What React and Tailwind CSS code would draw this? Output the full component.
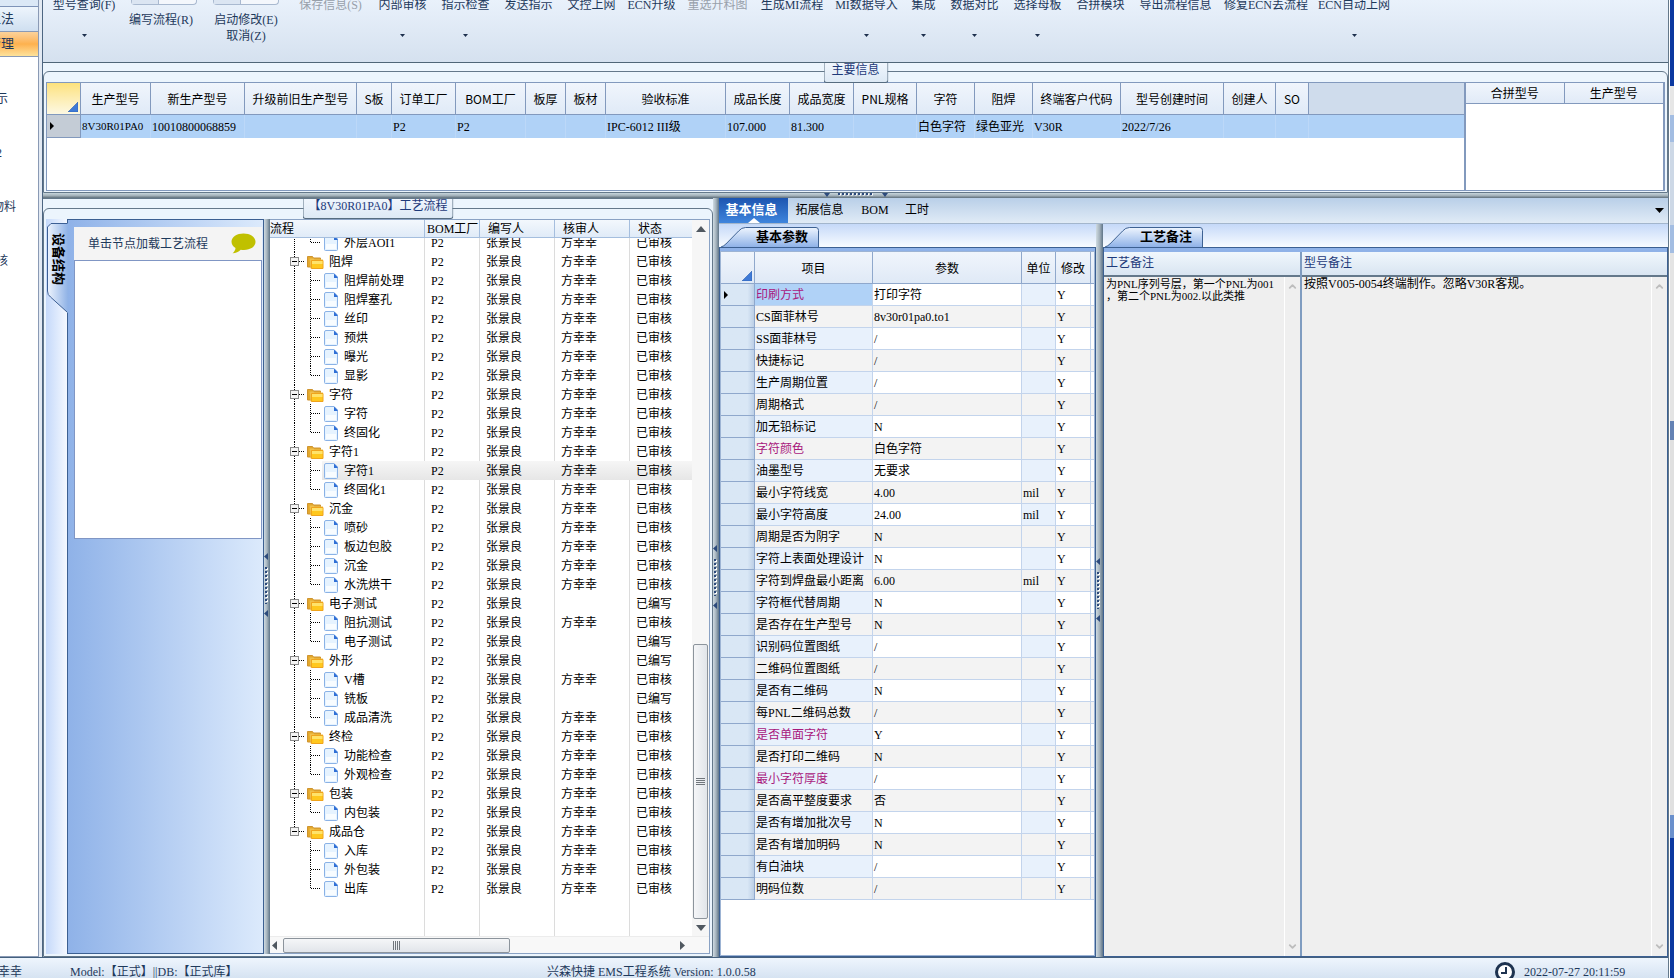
import clsx from "clsx";
import { ChevronDown, ChevronUp } from "lucide-react";

const ribbonLeft = { label: "型号查询(F)", width: "w-[82px]", menu: true };

const ribbonItems = [
  { label: "内部审核", width: "w-[63px]", menu: true },
  { label: "指示检查", width: "w-[63px]", menu: true },
  { label: "发送指示", width: "w-[63px]" },
  { label: "文控上网", width: "w-[63px]" },
  { label: "ECN升级", width: "w-[57px]" },
  { label: "重选开料图", width: "w-[75px]", disabled: true },
  { label: "生成MI流程", width: "w-[74px]" },
  { label: "MI数据导入", width: "w-[75px]", menu: true },
  { label: "集成", width: "w-[39px]", menu: true },
  { label: "数据对比", width: "w-[63px]", menu: true },
  { label: "选择母板", width: "w-[63px]", menu: true },
  { label: "合拼模块", width: "w-[63px]" },
  { label: "导出流程信息", width: "w-[87px]" },
  { label: "修复ECN丢流程", width: "w-[94px]" },
  { label: "ECN自动上网", width: "w-[82px]", menu: true },
];

const mainColumns = [
  { title: "生产型号", width: "w-[70px]", value: "8V30R01PA0", small: true },
  { title: "新生产型号", width: "w-[94px]", value: "10010800068859" },
  { title: "升级前旧生产型号", width: "w-[112px]" },
  { title: "S板", width: "w-[35px]" },
  { title: "订单工厂", width: "w-[64px]", value: "P2" },
  { title: "BOM工厂", width: "w-[70px]", value: "P2" },
  { title: "板厚", width: "w-[40px]" },
  { title: "板材", width: "w-[40px]" },
  { title: "验收标准", width: "w-[120px]", value: "IPC-6012 III级" },
  { title: "成品长度", width: "w-[64px]", value: "107.000" },
  { title: "成品宽度", width: "w-[64px]", value: "81.300" },
  { title: "PNL规格", width: "w-[63px]" },
  { title: "字符", width: "w-[58px]", value: "白色字符" },
  { title: "阻焊", width: "w-[58px]", value: "绿色亚光" },
  { title: "终端客户代码", width: "w-[88px]", value: "V30R" },
  { title: "型号创建时间", width: "w-[103px]", value: "2022/7/26" },
  { title: "创建人", width: "w-[52px]" },
  { title: "SO", width: "w-[33px]" },
];

const tree = [
  { name: "外层AOI1", last: true },
  { name: "阻焊", folder: true },
  { name: "阻焊前处理" },
  { name: "阻焊塞孔" },
  { name: "丝印" },
  { name: "预烘" },
  { name: "曝光" },
  { name: "显影", last: true },
  { name: "字符", folder: true },
  { name: "字符" },
  { name: "终固化", last: true },
  { name: "字符1", folder: true },
  { name: "字符1", selected: true },
  { name: "终固化1", last: true },
  { name: "沉金", folder: true },
  { name: "喷砂" },
  { name: "板边包胶" },
  { name: "沉金" },
  { name: "水洗烘干", last: true },
  { name: "电子测试", folder: true, auditor: "", status: "已编写" },
  { name: "阻抗测试" },
  { name: "电子测试", last: true, auditor: "", status: "已编写" },
  { name: "外形", folder: true, auditor: "", status: "已编写" },
  { name: "V槽" },
  { name: "铣板", auditor: "", status: "已编写" },
  { name: "成品清洗", last: true },
  { name: "终检", folder: true },
  { name: "功能检查" },
  { name: "外观检查", last: true },
  { name: "包装", folder: true },
  { name: "内包装", last: true },
  { name: "成品仓", folder: true, lastFolder: true },
  { name: "入库", tail: true },
  { name: "外包装", tail: true },
  { name: "出库", tail: true, last: true },
];

const params = [
  ["印刷方式", "打印字符", "", true],
  ["CS面菲林号", "8v30r01pa0.to1"],
  ["SS面菲林号", "/"],
  ["快捷标记", "/"],
  ["生产周期位置", "/"],
  ["周期格式", "/"],
  ["加无铅标记", "N"],
  ["字符颜色", "白色字符", "", true],
  ["油墨型号", "无要求"],
  ["最小字符线宽", "4.00", "mil"],
  ["最小字符高度", "24.00", "mil"],
  ["周期是否为阴字", "N"],
  ["字符上表面处理设计", "N"],
  ["字符到焊盘最小距离", "6.00", "mil"],
  ["字符框代替周期", "N"],
  ["是否存在生产型号", "N"],
  ["识别码位置图纸", "/"],
  ["二维码位置图纸", "/"],
  ["是否有二维码", "N"],
  ["每PNL二维码总数", "/"],
  ["是否单面字符", "Y", "", true],
  ["是否打印二维码", "N"],
  ["最小字符厚度", "/", "", true],
  ["是否高平整度要求", "否"],
  ["是否有增加批次号", "N"],
  ["是否有增加明码", "N"],
  ["有白油块", "/"],
  ["明码位数", "/"],
];

const HEAD_FONT = "font-['Noto_Sans_CJK_SC',sans-serif]";

function MenuArrow() {
  return (
    <svg width="5" height="3" viewBox="0 0 5 3" className="block">
      <path d="M0 0h5L2.5 3z" fill="#1d2f4d" />
    </svg>
  );
}

function RibbonButton({ label, width, menu, disabled }) {
  return (
    <button
      disabled={disabled}
      className={clsx(
        "flex h-full shrink-0 flex-col items-center whitespace-nowrap leading-[11px]",
        disabled ? "text-[#98a0aa]" : "text-[#1e395b]",
        width
      )}
    >
      <span>{label}</span>
      {menu && (
        <span className="mt-[23px]">
          <MenuArrow />
        </span>
      )}
    </button>
  );
}

function Gauge() {
  return (
    <div className="flex h-[5px] w-[66px] rounded-b-sm border-x border-b border-[#a9b9d0] bg-[#f4f7fc]">
      <div className="w-[27px] border-r border-[#a9b9d0] bg-[#dbe5f2]" />
    </div>
  );
}

function Ribbon() {
  return (
    <div className="flex h-[62px] shrink-0 overflow-hidden bg-linear-to-b from-[#e9f1fb] to-[#d5e1ef]">
      <RibbonButton {...ribbonLeft} />
      <div className="flex w-[72px] shrink-0 flex-col items-end">
        <Gauge />
        <button className="mt-2 w-full whitespace-nowrap leading-[14px] text-[#1e395b]">编写流程(R)</button>
      </div>
      <div className="flex w-[98px] shrink-0 flex-col items-center">
        <Gauge />
        <button className="mt-2 whitespace-nowrap leading-[14px] text-[#1e395b]">启动修改(E)</button>
        <button className="mt-px whitespace-nowrap leading-4 text-[#1e395b]">取消(Z)</button>
      </div>
      <RibbonButton label="保存信息(S)" width="w-[71px]" disabled />
      <div className="w-[5px] shrink-0" />
      {ribbonItems.map((item) => (
        <RibbonButton key={item.label} {...item} />
      ))}
    </div>
  );
}

function Sidebar() {
  return (
    <nav className="flex w-[43px] shrink-0 flex-col overflow-hidden border-r border-[#4d6682] bg-[#e3eaf3] pr-[3px]">
      <div className="flex min-h-0 flex-1 flex-col border-r border-b border-[#8a9ab5] bg-white text-[#1e395b]">
        <div className="h-[6px] shrink-0 bg-[#dbe8f6]" />
        <button className="flex h-[25px] shrink-0 items-center border-t border-[#7e93b8] bg-linear-to-b from-[#eef5fc] to-[#cfdff0] text-[13px]">
          <span className="-ml-3 whitespace-nowrap">工法</span>
        </button>
        <button className="flex h-[26px] shrink-0 items-center border-y border-[#8a9ab5] bg-linear-to-b from-[#fbd29a] via-[#fdb14e] to-[#fde29a] text-[13px]">
          <span className="-ml-3 whitespace-nowrap">管理</span>
        </button>
        <a href="#" className="mt-[33px] -ml-1 leading-[18px]">示</a>
        <a href="#" className="mt-[36px] -ml-1 leading-[18px]">2</a>
        <a href="#" className="mt-[36px] -ml-2 leading-[18px] whitespace-nowrap">物料</a>
        <a href="#" className="mt-[36px] -ml-1 leading-[18px]">核</a>
      </div>
    </nav>
  );
}

// Group box whose caption sits over its top border
function GroupBox({ title, width, className, children }) {
  return (
    <section className={clsx("relative flex flex-col bg-[#ecf5fd]", className)}>
      <div className="flex min-h-0 flex-1 flex-col rounded-t-md border border-[#64788a] px-[2px]">{children}</div>
      <h2
        className={clsx(
          "absolute top-0 left-1/2 h-5 -translate-x-1/2 rounded-b-[3px] border border-t-0 border-[#566c80] bg-linear-to-b from-[#f0f6fd] to-[#dde9f5] text-center leading-[15px] whitespace-nowrap text-[#1e3a7a]",
          width
        )}
      >
        {title}
      </h2>
    </section>
  );
}

function Corner({ className }) {
  return (
    <svg width="10" height="10" viewBox="0 0 10 10" className={className}>
      <path d="M10 0v10H0z" fill="#3f7ad6" stroke="#2e5fae" strokeWidth=".6" />
    </svg>
  );
}

function RowMarker() {
  return (
    <svg width="4" height="8" viewBox="0 0 4 8" className="ml-[3px] block">
      <path d="M0 0l4 4-4 4z" fill="#000" />
    </svg>
  );
}

function MainInfo() {
  return (
    <GroupBox title="主要信息" width="w-[65px]" className="h-[131px] shrink-0 border-t border-[#4f6678] pt-2">
      <div className="mt-[10px] mb-px flex min-h-0 flex-1 border border-[#8299bd] bg-white">
        <div className="min-w-0 flex-1 overflow-hidden bg-white">
          <table className="w-full table-fixed border-separate border-spacing-0">
            <thead className={HEAD_FONT}>
              <tr className="h-8">
                <th className="w-[34px] border-r border-b border-[#8299bd] bg-linear-to-b from-[#fde27c] to-[#fdf8e2] p-0 align-bottom">
                  <Corner className="mr-[2px] mb-[2px] ml-auto" />
                </th>
                {mainColumns.map((col) => (
                  <th
                    key={col.title}
                    className={clsx(
                      "border-r border-b border-[#8299bd] bg-linear-to-b from-[#f0f5fc] to-[#e0eaf7] p-0 font-normal whitespace-nowrap",
                      col.width
                    )}
                  >
                    {col.title}
                  </th>
                ))}
                <th className="border-b border-[#8299bd] bg-[#cfdcec]" />
              </tr>
            </thead>
            <tbody>
              <tr className="h-[23px] bg-[#b0d2f7]">
                <td className="border-r border-b border-[#8299bd] bg-[#c4ccd6] p-0">
                  <RowMarker />
                </td>
                {mainColumns.map((col) => (
                  <td
                    key={col.title}
                    className={clsx("border-r border-[#bcd8f8] p-0 pl-px whitespace-nowrap", col.small && "text-[11px]")}
                  >
                    {col.value}
                  </td>
                ))}
                <td />
              </tr>
            </tbody>
          </table>
        </div>
        <div className="w-[200px] shrink-0 border-l-2 border-r border-[#8299bd] bg-white">
          <table className={clsx("w-full table-fixed border-separate border-spacing-0", HEAD_FONT)}>
            <thead>
              <tr className="h-[21px] bg-linear-to-b from-[#f0f5fc] to-[#e0eaf7]">
                <th className="border-r border-b border-[#8299bd] p-0 font-normal">合拼型号</th>
                <th className="border-b border-[#8299bd] p-0 font-normal">生产型号</th>
              </tr>
            </thead>
          </table>
        </div>
      </div>
    </GroupBox>
  );
}

function HorizontalSplitter() {
  return (
    <div className="flex h-[5px] shrink-0 justify-center bg-linear-to-b from-[#c6d5dc] via-[#a5b3bb] to-[#5f707c]">
      <svg width="64" height="5" viewBox="0 0 64 5">
        <path d="M0 0h6L3 4zM58 0h6l-3 4z" fill="#2c4a7c" />
        <path d="M14 1.500h36" stroke="#fff" strokeWidth="2" strokeDasharray="2 2" strokeDashoffset="-1" />
        <path d="M14 1h36" stroke="#2c4a7c" strokeWidth="2" strokeDasharray="2 2" />
      </svg>
    </div>
  );
}

function VerticalSplitter({ width, grip }) {
  return (
    <div className={clsx("flex shrink-0 flex-col bg-linear-to-r from-[#cfdbe2] via-[#a5b3bd] to-[#5f7588]", width)}>
      <svg width="6" height="64" viewBox="0 0 6 64" className={grip}>
        <path d="M4 0v7L0 3.500zM4 57v7l-4-3.500z" fill="#2c4a7c" />
        <path d="M3 14v37" stroke="#fff" strokeWidth="2" strokeDasharray="2 2" strokeDashoffset="-1" />
        <path d="M2 14v37" stroke="#2c4a7c" strokeWidth="2" strokeDasharray="2 2" />
      </svg>
    </div>
  );
}

function DevicePanel() {
  return (
    <>
      <div className="relative w-[21px] shrink-0 bg-linear-to-r from-[#c5d9fa] to-[#f4f8ff]">
        <svg width="22" height="96" viewBox="0 0 22 96" className="absolute top-1 left-px">
          <defs>
            <linearGradient id="sideTab">
              <stop offset="0" stopColor="#eef4fd" />
              <stop offset="1" stopColor="#8fb2e6" />
            </linearGradient>
          </defs>
          <path d="M21 .5H4L.5 4v64q0 4 3 6L21 90z" fill="url(#sideTab)" />
          <path d="M20 .5H4L.5 4v64q0 4 3 6L20 89" fill="none" stroke="#3c5f94" />
        </svg>
        <button className="absolute top-[14px] left-1 text-[13px] leading-4 font-bold [text-orientation:sideways] [writing-mode:vertical-rl]">
          设备结构
        </button>
      </div>
      <div className="flex w-[197px] shrink-0 flex-col border border-[#3c6092] bg-linear-to-r from-[#8fb2e8] to-[#dceafc] pt-[7px] pr-px pl-[6px]">
        <div className="flex h-[33px] shrink-0 items-center justify-between bg-[#f4f4f4] pr-[6px] pl-[14px] text-[#1e395b]">
          <span>单击节点加载工艺流程</span>
          <svg width="25" height="21" viewBox="0 0 25 21">
            <path d="M12.500.5C19 .5 24.500 4 24.500 8.800S19.500 17 13 17c-1.200 0-2.300-.1-3.300-.3C7.500 18.800 5 20 1.500 20.300 3.300 18.900 4.400 17 4.500 15 2 13.500.5 11.300.5 8.800.5 4 6 .5 12.500.5z" fill="#c0c000" />
          </svg>
        </div>
        <div className="h-[279px] border border-[#8096c4] bg-white" />
      </div>
    </>
  );
}

function FolderIcon() {
  return (
    <svg width="17" height="14" viewBox="0 0 17 14" className="shrink-0">
      <path d="M.5 1.500h5l1 1.500h7v9H.5z" fill="#e3a82c" stroke="#cf9430" />
      <path d="M2.500 3.500h4l1 1h8.500v9H3.500z" fill="#f0c04c" />
      <path d="M4.500 5.500H16v8H4.500z" fill="#ffc81e" stroke="#f0a41c" />
      <path d="M5 6h10.500v3H5z" fill="#ffe36a" />
    </svg>
  );
}

function FileIcon() {
  return (
    <svg width="14" height="16" viewBox="0 0 14 16" className="shrink-0">
      <path d="M.5 2Q.5.500 2 .5h8L13.500 4v10.500q0 1-1 1h-11q-1 0-1-1z" fill="#e6f3ff" stroke="#8ab2e6" />
      <path d="M10 .5 13.500 4v1H10z" fill="#2f6fd6" />
      <path d="M2 9h10v5H2z" fill="#fff" opacity=".7" />
    </svg>
  );
}

function TreeLines({ node }) {
  const dots = { stroke: "#000", strokeWidth: 1, strokeDasharray: "1 1", fill: "none" };
  if (node.folder) {
    return (
      <svg width="37" height="19" viewBox="0 0 37 19" className="shrink-0">
        <path d={node.lastFolder ? "M24.500 0v9" : "M24.500 0v19"} {...dots} />
        <path d="M29 9.500h6" {...dots} />
        <rect x="20.500" y="5.500" width="8" height="8" fill="#f4f4f4" stroke="#8a8a8a" />
        <path d="M22 9.500h5" stroke="#000" />
      </svg>
    );
  }
  return (
    <svg width="54" height="19" viewBox="0 0 54 19" className="shrink-0">
      {!node.tail && <path d="M24.500 0v19" {...dots} />}
      <path d={node.last ? "M40.500 0v10" : "M40.500 0v19"} {...dots} />
      <path d="M41 9.500h9" {...dots} />
    </svg>
  );
}

function TreeRow({ node }) {
  const cell = clsx("border-r p-0 whitespace-nowrap", node.selected ? "border-transparent" : "border-[#dcdcdc]");
  return (
    <tr className={clsx("h-[19px]", node.selected && "bg-linear-to-b from-[#f6f6f6] to-[#e6e6e6]")}>
      <td className={cell}>
        <div className={clsx("flex h-[19px] items-center", node.selected && "bg-linear-to-r from-white from-[52px] to-transparent to-[52px]")}>
          <TreeLines node={node} />
          {node.folder ? <FolderIcon /> : <FileIcon />}
          <span className={node.folder ? "ml-[5px]" : "ml-[6px]"}>{node.name}</span>
        </div>
      </td>
      <td className={clsx(cell, "pl-[6px]")}>P2</td>
      <td className={clsx(cell, "pl-[6px]")}>张景良</td>
      <td className={clsx(cell, "pl-[6px]")}>{node.auditor ?? "方幸幸"}</td>
      <td className="p-0 pl-[6px]">{node.status ?? "已审核"}</td>
    </tr>
  );
}

function TreeColumns() {
  return (
    <colgroup>
      <col className="w-[155px]" />
      <col className="w-[55px]" />
      <col className="w-[75px]" />
      <col className="w-[75px]" />
      <col />
    </colgroup>
  );
}

function ProcessTree() {
  return (
    <div className="flex min-w-0 flex-1 flex-col border-t border-r border-b border-[#8aa2c4] bg-white">
      <div className="flex min-h-0 flex-1">
        <div className="flex min-w-0 flex-1 flex-col">
          <table className="w-full table-fixed border-separate border-spacing-0">
            <TreeColumns />
            <thead>
              <tr className="h-[18px] bg-linear-to-b from-[#f3f8fd] to-[#dfeaf7] text-left">
                <th className="border-r border-b border-[#a5bede] p-0 font-normal">流程</th>
                <th className="border-r border-b border-[#a5bede] p-0 pl-[2px] font-normal whitespace-nowrap">BOM工厂</th>
                <th className="border-r border-b border-[#a5bede] p-0 pl-2 font-normal">编写人</th>
                <th className="border-r border-b border-[#a5bede] p-0 pl-2 font-normal">核审人</th>
                <th className="border-b border-[#a5bede] p-0 pl-2 font-normal">状态</th>
              </tr>
            </thead>
          </table>
          <div className="min-h-0 flex-1 overflow-hidden">
            <table className="-mt-[5px] w-full table-fixed border-separate border-spacing-0">
              <TreeColumns />
              <tbody>
                {tree.map((node, i) => (
                  <TreeRow key={i} node={node} />
                ))}
                <tr className="h-20">
                  <td className="border-r border-[#dcdcdc]" />
                  <td className="border-r border-[#dcdcdc]" />
                  <td className="border-r border-[#dcdcdc]" />
                  <td className="border-r border-[#dcdcdc]" />
                  <td />
                </tr>
              </tbody>
            </table>
          </div>
        </div>
        <div className="flex w-[17px] shrink-0 flex-col items-center bg-[#f6f6f6]">
          <svg width="10" height="6" viewBox="0 0 10 6" className="mt-[6px] shrink-0">
            <path d="M5 0l5 6H0z" fill="#505860" />
          </svg>
          <div className="flex-1" />
          <div className="flex h-[275px] w-[15px] items-center justify-center rounded-[2px] border border-[#8c949c] bg-linear-to-r from-[#f5f6f8] to-[#e1e5ea]">
            <svg width="9" height="7" viewBox="0 0 9 7">
              <path d="M0 .5h9M0 2.500h9M0 4.500h9M0 6.500h9" stroke="#70767c" />
            </svg>
          </div>
          <svg width="10" height="6" viewBox="0 0 10 6" className="mt-[6px] mb-[5px] shrink-0">
            <path d="M0 0h10L5 6z" fill="#505860" />
          </svg>
        </div>
      </div>
      <div className="flex h-[17px] shrink-0 items-center border-t border-[#ececec] bg-[#f8f8f8] pr-6 pl-[2px]">
        <svg width="5" height="9" viewBox="0 0 5 9" className="shrink-0">
          <path d="M5 0v9L0 4.500z" fill="#505860" />
        </svg>
        <div className="ml-[6px] flex h-[15px] w-[227px] items-center justify-center rounded-[2px] border border-[#8c949c] bg-linear-to-b from-[#f5f6f8] to-[#e1e5ea]">
          <svg width="7" height="9" viewBox="0 0 7 9">
            <path d="M.5 0v9M2.500 0v9M4.500 0v9M6.500 0v9" stroke="#70767c" />
          </svg>
        </div>
        <svg width="5" height="9" viewBox="0 0 5 9" className="ml-auto shrink-0">
          <path d="M0 0v9l5-4.500z" fill="#505860" />
        </svg>
      </div>
    </div>
  );
}

function ProcessPanel() {
  return (
    <GroupBox
      title="【8V30R01PA0】工艺流程"
      width="w-[151px]"
      className="w-[670px] shrink-0 border-t border-[#64788a] pt-[9px]"
    >
      <div className="mt-[10px] mb-[2px] flex min-h-0 flex-1">
        <DevicePanel />
        <VerticalSplitter width="w-[6px]" grip="mt-[334px]" />
        <ProcessTree />
      </div>
    </GroupBox>
  );
}

function SlantTab({ id, title, width }) {
  return (
    <div className="flex h-[23px] shrink-0 items-end bg-linear-to-b from-[#c5d9f8] to-[#f8fbff]">
      <button className={clsx("relative ml-[2px] h-5 text-[13px] leading-5 font-bold", width)}>
        <svg width="100%" height="20" viewBox="0 0 100 20" preserveAspectRatio="none" className="absolute inset-0">
          <defs>
            <linearGradient id={id} x2="0" y2="1">
              <stop offset="0" stopColor="#eef5fe" />
              <stop offset="1" stopColor="#8fb2e8" />
            </linearGradient>
          </defs>
          <path d="M0 20q3-1 5-3L18 4Q21 .5 25 .5h72q2.500 0 2.500 3V20" fill={`url(#${id})`} stroke="#3c6092" />
        </svg>
        <span className="relative block pl-6 text-center">{title}</span>
      </button>
    </div>
  );
}

function ParamsPanel() {
  return (
    <div className="flex w-[377px] shrink-0 flex-col">
      <SlantTab id="paramTab" title="基本参数" width="w-[98px]" />
      <div className="flex min-h-0 flex-1 flex-col border border-[#3c6092] bg-[#8fb2e8] pt-[3px]">
        <div className="min-h-0 flex-1 overflow-hidden border border-[#9db4d4] bg-white">
          <table className="w-full table-fixed border-separate border-spacing-0">
            <thead className={HEAD_FONT}>
              <tr className="h-8 bg-linear-to-b from-[#f0f5fc] to-[#dfe9f6]">
                <th className="w-[34px] border-r border-b border-[#8fa8cc] p-0 align-bottom">
                  <Corner className="mr-[2px] mb-[2px] ml-auto" />
                </th>
                <th className="w-[118px] border-r border-b border-[#8fa8cc] p-0 font-normal">项目</th>
                <th className="w-[149px] border-r border-b border-[#8fa8cc] p-0 font-normal">参数</th>
                <th className="w-[34px] border-r border-b border-[#8fa8cc] p-0 font-normal">单位</th>
                <th className="w-[35px] border-r border-b border-[#8fa8cc] p-0 font-normal">修改</th>
                <th className="border-b border-[#8fa8cc] p-0" />
              </tr>
            </thead>
            <tbody>
              {params.map(([name, value, unit, required], i) => {
                const odd = i % 2 === 1;
                return (
                  <tr key={name} className={clsx("h-[22px]", odd ? "bg-[#f3f3f3]" : "bg-white")}>
                    <td className="border-r border-b border-[#8fa8cc] bg-linear-to-r from-[#d9e7f5] from-80% to-[#bccfe6] p-0">
                      {i === 0 && <RowMarker />}
                    </td>
                    <td
                      className={clsx(
                        "border-r border-b border-[#c3d4ec] p-0 pl-px whitespace-nowrap",
                        i === 0 ? "bg-[#b0d2f7]" : !odd && "bg-[#e8f1fc]",
                        required && "text-[#a8187c]"
                      )}
                    >
                      {name}
                    </td>
                    <td className="border-r border-b border-[#c3d4ec] p-0 pl-px">{value}</td>
                    <td className={clsx("border-r border-b border-[#c3d4ec] p-0 pl-px", !odd && "bg-[#e8f1fc]")}>{unit}</td>
                    <td className="border-r border-b border-[#c3d4ec] p-0 pl-px">Y</td>
                    <td className="border-b border-[#c3d4ec] p-0" />
                  </tr>
                );
              })}
            </tbody>
          </table>
        </div>
      </div>
    </div>
  );
}

function NoteBox({ id, title, text, size, className }) {
  return (
    <div className={clsx("flex flex-col", className)}>
      <label
        htmlFor={id}
        className="h-[25px] shrink-0 border-b-2 border-[#64788a] bg-linear-to-b from-[#f0f7fd] to-[#d9e5f1] pl-[2px] leading-[22px] text-[#1e3a7a]"
      >
        {title}
      </label>
      <div className="flex min-h-0 flex-1 bg-[#efefef]">
        <textarea
          id={id}
          readOnly
          defaultValue={text}
          className={clsx("min-w-0 flex-1 resize-none overflow-hidden pt-px pl-[2px] leading-3 whitespace-pre outline-none", size)}
        />
        <div className="flex w-4 shrink-0 flex-col items-center justify-between border-l border-white py-1 text-[#bdbdbd]">
          <ChevronUp size={11} strokeWidth={4} />
          <ChevronDown size={11} strokeWidth={4} />
        </div>
      </div>
    </div>
  );
}

function NotesPanel() {
  return (
    <div className="flex min-w-0 flex-1 flex-col">
      <SlantTab id="noteTab" title="工艺备注" width="w-[98px]" />
      <div className="flex min-h-0 flex-1 border border-[#3c6092] bg-[#8fb2e8] pt-1">
        <NoteBox
          id="processNote"
          title="工艺备注"
          text={"为PNL序列号层，第一个PNL为001\n，第二个PNL为002.以此类推"}
          size="text-[11px]"
          className="w-[198px] shrink-0 border-r-2 border-[#7f9cc0]"
        />
        <NoteBox
          id="modelNote"
          title="型号备注"
          text="按照V005-0054终端制作。忽略V30R客规。"
          size="text-xs"
          className="min-w-0 flex-1"
        />
      </div>
    </div>
  );
}

function DetailPanel() {
  return (
    <div className="flex min-w-0 flex-1 flex-col">
      <div className="flex h-[26px] shrink-0 items-stretch border-b border-[#a3b6cc] bg-linear-to-b from-[#b9cfe8] to-[#e0ebf6]">
        <button className="relative w-[69px] bg-linear-to-b from-[#1d55b0] to-[#3f85dd] pr-1 pb-[2px] text-[13px] font-bold text-white">
          基本信息
          <span className="absolute bottom-0 left-1/2 -translate-x-1/2 border-x-[6px] border-b-[5px] border-x-transparent border-b-white" />
        </button>
        <button className="w-[63px] pb-[2px]">拓展信息</button>
        <button className="w-12 pb-[2px]">BOM</button>
        <button className="w-9 pb-[2px]">工时</button>
        <button aria-label="更多" className="mr-1 ml-auto">
          <svg width="9" height="5" viewBox="0 0 9 5">
            <path d="M0 0h9L4.500 5z" fill="#000" />
          </svg>
        </button>
      </div>
      <div className="flex min-h-0 flex-1">
        <ParamsPanel />
        <VerticalSplitter width="w-[7px]" grip="mt-[334px]" />
        <NotesPanel />
      </div>
    </div>
  );
}

function StatusBar() {
  return (
    <footer className="flex h-[21px] shrink-0 border-t border-[#44607e] bg-linear-to-b from-[#eef5fd] to-[#d6e3f2] leading-7 whitespace-nowrap text-[#1e395b]">
      <span className="w-[70px] shrink-0">
        <span className="-ml-[2px]">幸幸</span>
      </span>
      <span className="w-[477px] shrink-0">Model:【正式】||DB:【正式库】</span>
      <span className="flex-1">兴森快捷 EMS工程系统 Version: 1.0.0.58</span>
      <svg width="22" height="20" viewBox="0 0 22 20" className="mt-px shrink-0">
        <circle cx="11" cy="13" r="8.500" fill="#fff" stroke="#1e3350" strokeWidth="3" />
        <path d="M12 8v6H7" fill="none" stroke="#1e3350" strokeWidth="2" />
      </svg>
      <span className="ml-2 w-36 shrink-0">2022-07-27 20:11:59</span>
    </footer>
  );
}

// Slice of the desktop that shows past the window's right edge
function DesktopEdge() {
  return (
    <div className="flex w-1 shrink-0 flex-col bg-[#0a38a0]">
      <div className="h-[86px]" />
      <div className="h-[29px] bg-[#e6e6e6]" />
      <div className="h-[27px] bg-[#a3bde2]" />
      <div className="h-[83px] bg-[#cdd8e6]" />
      <div className="h-[28px] bg-[#a3bde2]" />
      <div className="h-[168px] bg-[#e4e4e4]" />
      <div className="h-[19px] bg-[#6482b4]" />
      <div className="h-[375px] bg-[#e0e0e0]" />
      <div className="h-[23px] bg-[#6a90cc]" />
    </div>
  );
}

export default function App() {
  return (
    <div className="flex h-screen overflow-hidden bg-white font-['Liberation_Serif','Noto_Sans_CJK_SC',serif] text-xs text-black">
      <div className="mr-px flex min-w-0 flex-1 flex-col border-r border-[#64788a]">
        <div className="flex min-h-0 flex-1">
          <Sidebar />
          <main className="flex min-w-0 flex-1 flex-col">
            <Ribbon />
            <MainInfo />
            <HorizontalSplitter />
            <div className="flex min-h-0 flex-1">
              <ProcessPanel />
              <VerticalSplitter width="w-[6px]" grip="mt-[347px]" />
              <DetailPanel />
            </div>
          </main>
        </div>
        <StatusBar />
      </div>
      <DesktopEdge />
    </div>
  );
}
